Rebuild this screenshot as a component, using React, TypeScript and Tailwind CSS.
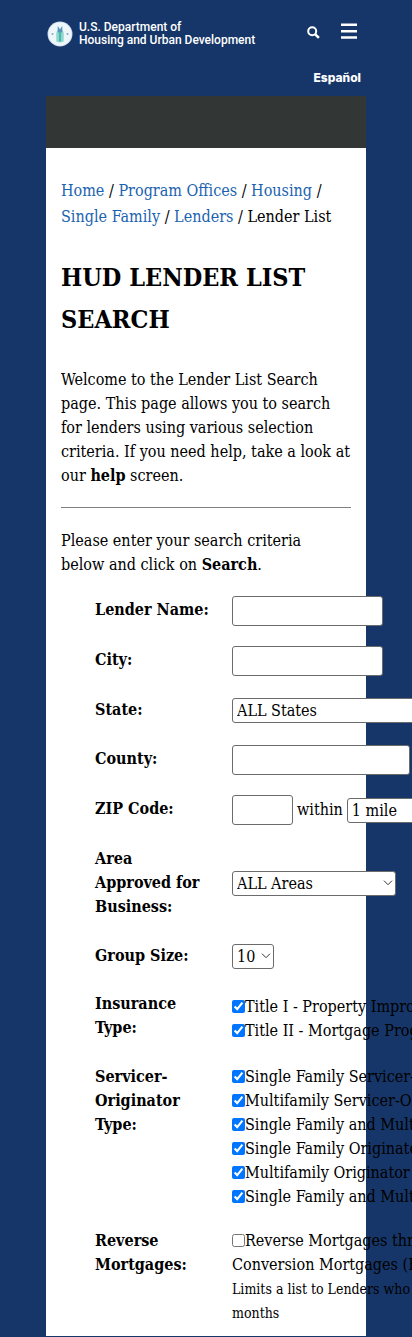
import type { ReactNode } from "react";

const fieldClass = "h-[30px] rounded-[3px] border border-[#6b6b6b] bg-white px-1";

const crumbs = ["Home", "Program Offices", "Housing", "Single Family", "Lenders"];

const insuranceTypes = ["Title I - Property Improvement", "Title II - Mortgage Programs"];

const servicerTypes = [
  "Single Family Servicer-Originator",
  "Multifamily Servicer-Originator",
  "Single Family and Multifamily Servicer",
  "Single Family Originator",
  "Multifamily Originator",
  "Single Family and Multifamily Originator",
];

function Row({ children }: { children: ReactNode }) {
  return <div className="grid grid-cols-[117px_1fr] gap-x-5">{children}</div>;
}

function FieldLabel({ id, children }: { id: string; children: ReactNode }) {
  return (
    <label htmlFor={id} className="pt-[2px] font-bold whitespace-normal">
      {children}
    </label>
  );
}

function Select({ id, option, width }: { id: string; option: string; width: string }) {
  return (
    <span className={`relative block ${width}`}>
      <select
        id={id}
        className="block h-[25px] w-full appearance-none rounded-[3px] border border-[#6b6b6b] bg-white pl-1 leading-[23px]"
      >
        <option>{option}</option>
      </select>
      <svg
        viewBox="0 0 10 6"
        className="pointer-events-none absolute top-[9px] right-[3px] h-[6px] w-[10px]"
        fill="none"
        stroke="#333"
        aria-hidden="true"
      >
        <path d="M1 .7l4 4 4-4" />
      </svg>
    </span>
  );
}

function Check({ label, checked }: { label: string; checked?: boolean }) {
  return (
    <label className="flex items-center leading-6">
      <input type="checkbox" defaultChecked={checked} className="mb-[2px] size-[13px] shrink-0 accent-[#0075ff]" />
      {label}
    </label>
  );
}

function Seal() {
  return (
    <svg viewBox="0 0 26 26" className="size-[26px] shrink-0" aria-hidden="true">
      <circle cx="13" cy="13" r="12.5" fill="#c3d3e6" />
      <circle cx="13" cy="13" r="11.7" fill="#eef6fa" />
      <path d="M9.3 20.5V12l1.5-4V5.5l2.2 3 2.2-3V8l1.5 4v8.5l-3.7 1z" fill="#8ad8cb" />
      <path d="M10.8 5v6l2.2 1.5 2.2-1.5V5L13 8.5z" fill="#5b93bd" />
      <path d="M12 11h2v9.5h-2z" fill="#52b3b4" />
      <circle cx="5.5" cy="13" r="1" fill="#7aa9cc" />
      <circle cx="20.5" cy="13" r="1" fill="#7aa9cc" />
    </svg>
  );
}

export default function App() {
  return (
    <div className="overflow-x-hidden bg-[#163669] px-[46px] pb-px font-['DejaVu_Serif_Condensed','DejaVu_Serif',serif] text-base text-black">
      <header className="font-[Roboto,sans-serif] text-white">
        <div className="flex items-start pt-[21px]">
          <a href="#home" className="flex items-center gap-[6px] pl-px text-[12px] leading-[13px] font-medium whitespace-nowrap">
            <Seal />
            <span>
              U.S. Department of
              <br />
              Housing and Urban Development
            </span>
          </a>
          <button type="button" aria-label="Search" className="mt-[5px] ml-auto">
            <svg viewBox="0 0 13 13" className="size-[13px]" fill="none" stroke="currentColor">
              <circle cx="5.2" cy="5.2" r="4" strokeWidth="2" />
              <path d="M8.3 8.3l3.6 3.6" strokeWidth="2.6" />
            </svg>
          </button>
          <button type="button" aria-label="Menu" className="mt-[2px] mr-[9px] ml-[21px]">
            <svg viewBox="0 0 16 16" className="size-4" fill="currentColor">
              <path d="M0 .5h16v2.4H0zM0 7h16v2.4H0zM0 13.3h16v2.4H0z" />
            </svg>
          </button>
        </div>
        <div className="flex justify-end pt-[23px] pr-[5px] pb-[10px] font-[Inter,sans-serif] text-[12px] leading-4 font-extrabold">
          <a href="#es">Español</a>
        </div>
      </header>
      <div className="h-[52px] bg-[#323635]" />
      <main className="bg-white px-[15px] pt-[30px] pb-[11px]">
        <nav className="leading-[26px]">
          {crumbs.map((c) => (
            <span key={c}>
              <a href="#crumb" className="text-[#1c63b0]">
                {c}
              </a>
              {" / "}
            </span>
          ))}
          Lender List
        </nav>
        <h1 className="mt-[27px] text-[25px] leading-[42px] font-bold">HUD LENDER LIST SEARCH</h1>
        <p className="mt-[27px] leading-6">
          Welcome to the Lender List Search page. This page allows you to search for lenders using various selection
          criteria. If you need help, take a look at our <b>help</b> screen.
        </p>
        <hr className="mt-[19px] border-t border-[#808080]" />
        <p className="mt-[21px] pr-4 leading-6">
          Please enter your search criteria below and click on <b>Search</b>.
        </p>
        <form className="mt-[19px] flex w-[480px] flex-col gap-5 pl-[34px] leading-6 whitespace-nowrap">
          <Row>
            <FieldLabel id="name">Lender Name:</FieldLabel>
            <input id="name" className={`${fieldClass} w-[151px]`} />
          </Row>
          <Row>
            <FieldLabel id="city">City:</FieldLabel>
            <input id="city" className={`${fieldClass} w-[151px]`} />
          </Row>
          <Row>
            <FieldLabel id="state">State:</FieldLabel>
            <div className="flex py-[2px]">
              <Select id="state" option="ALL States" width="w-[260px]" />
            </div>
          </Row>
          <Row>
            <FieldLabel id="county">County:</FieldLabel>
            <input id="county" className={`${fieldClass} w-[178px]`} />
          </Row>
          <Row>
            <FieldLabel id="zip">ZIP Code:</FieldLabel>
            <div className="flex items-center gap-1">
              <input id="zip" className={`${fieldClass} w-[61px]`} />
              <label htmlFor="miles">within</label>
              <Select id="miles" option="1 mile" width="w-[90px]" />
            </div>
          </Row>
          <Row>
            <FieldLabel id="area">Area Approved for Business:</FieldLabel>
            <div className="flex min-h-[77px] items-center">
              <Select id="area" option="ALL Areas" width="w-[164px]" />
            </div>
          </Row>
          <Row>
            <FieldLabel id="size">Group Size:</FieldLabel>
            <div className="flex py-[2px]">
              <Select id="size" option="10" width="w-[42px]" />
            </div>
          </Row>
          <Row>
            <div className="pt-px font-bold whitespace-normal">Insurance Type:</div>
            <div className="pt-1 pb-px">
              {insuranceTypes.map((t) => (
                <Check key={t} label={t} checked />
              ))}
            </div>
          </Row>
          <Row>
            <div className="pt-px font-bold whitespace-normal">Servicer-Originator Type:</div>
            <div className="pt-px">
              {servicerTypes.map((t) => (
                <Check key={t} label={t} checked />
              ))}
            </div>
          </Row>
          <Row>
            <div className="font-bold whitespace-normal">Reverse Mortgages:</div>
            <div>
              <Check label="Reverse Mortgages through Home Equity" />
              <div>Conversion Mortgages (HECM)</div>
              <div className="text-sm leading-6">
                Limits a list to Lenders who have done so in the last 12
                <br />
                months
              </div>
            </div>
          </Row>
        </form>
      </main>
    </div>
  );
}
